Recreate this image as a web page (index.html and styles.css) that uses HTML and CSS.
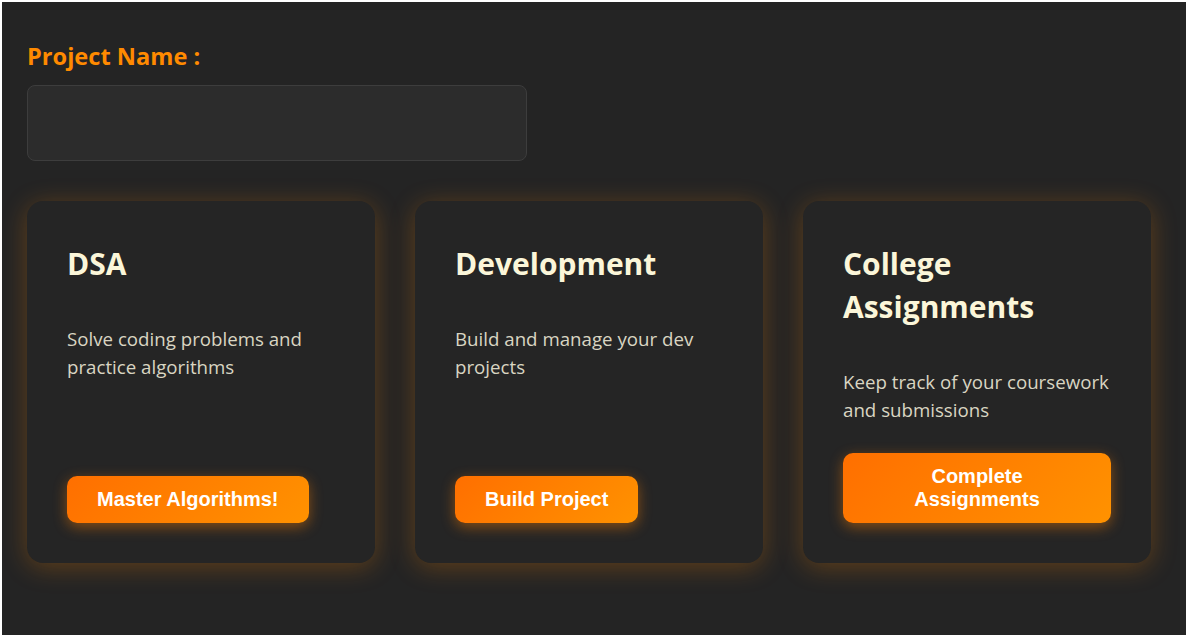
FILE: index.html
```html
<!DOCTYPE html>
<html lang="en">
<head>
<meta charset="utf-8">
<title>Projects</title>
<link rel="stylesheet" href="styles.css">
</head>
<body>
<main class="page">
  <label class="field-label" for="project-name">Project Name :</label>
  <input class="field-input" id="project-name" type="text">
  <section class="cards">
    <article class="card">
      <h2 class="card-title">DSA</h2>
      <p class="card-text">Solve coding problems and practice algorithms</p>
      <button class="card-btn">Master Algorithms!</button>
    </article>
    <article class="card">
      <h2 class="card-title">Development</h2>
      <p class="card-text">Build and manage your dev projects</p>
      <button class="card-btn">Build Project</button>
    </article>
    <article class="card">
      <h2 class="card-title">College Assignments</h2>
      <p class="card-text">Keep track of your coursework and submissions</p>
      <button class="card-btn">Complete Assignments</button>
    </article>
  </section>
</main>
</body>
</html>
```
FILE: styles.css
```css
* { box-sizing: border-box; }

html, body { height: 100%; }

body {
  margin: 0;
  padding: 2px;
  background: #ffffff;
  font-family: "Open Sans", "Noto Sans", sans-serif;
}

.page {
  min-height: 633px;
  background: #242424;
  padding: 38px 25px 25px;
}

.field-label {
  display: block;
  margin: 0 0 13px;
  font-size: 23.6px;
  line-height: 32px;
  font-weight: 700;
  color: #ff8a00;
}

.field-input {
  display: block;
  width: 500px;
  height: 76px;
  margin: 0;
  padding: 0 16px;
  background: #2c2c2c;
  border: 1px solid #3d3d3d;
  border-radius: 8px;
  color: #eee;
  font: inherit;
  outline: none;
}

.cards {
  display: grid;
  grid-template-columns: repeat(3, 348px);
  gap: 40px;
  margin-top: 40px;
}

.card {
  display: flex;
  flex-direction: column;
  align-items: flex-start;
  padding: 40px;
  background: #252525;
  border-radius: 16px;
  box-shadow: 0 4px 26px rgba(255, 136, 0, 0.28);
}

.card-title {
  margin: 1px 0 0;
  font-size: 30px;
  line-height: 43px;
  font-weight: 700;
  color: #fbf6d9;
}

.card-text {
  margin: 40px 0 29px;
  font-size: 18.7px;
  line-height: 28px;
  color: #d9d5c2;
}

.card-btn {
  margin-top: auto;
  padding: 12px 30px;
  border: none;
  border-radius: 10px;
  background: linear-gradient(135deg, #ff6f00, #ff9200);
  color: #ffffff;
  font-family: "Liberation Sans", Arial, sans-serif;
  font-size: 20px;
  font-weight: 700;
  line-height: 23px;
  text-align: center;
  box-shadow: 0 4px 14px rgba(255, 128, 0, 0.45);
  cursor: pointer;
}
```
